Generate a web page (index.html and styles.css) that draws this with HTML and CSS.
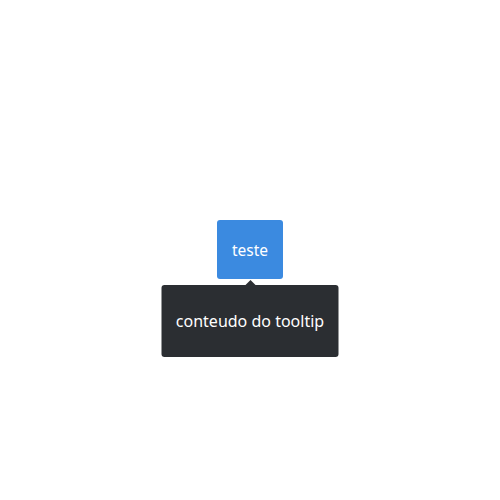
FILE: index.html
```html
<!DOCTYPE html>
<html>
<head>
<meta charset="utf-8">
<link rel="stylesheet" href="styles.css">
</head>
<body>
<div class="stage">
  <div class="anchor">
    <button class="btn">teste</button>
    <div class="tooltip">
      <span class="arrow"></span>
      conteudo do tooltip
    </div>
  </div>
</div>
</body>
</html>
```
FILE: styles.css
```css
html, body {
  margin: 0;
  padding: 0;
  background: #fff;
  font-family: "Noto Sans", "Open Sans", sans-serif;
}
.stage {
  width: 500px;
  height: 500px;
  display: flex;
  align-items: center;
  justify-content: center;
}
.anchor {
  position: relative;
  margin-top: -1px;
}
.btn {
  width: 66px;
  height: 59px;
  border: none;
  border-radius: 3px;
  background: #3b8ae0;
  color: #fff;
  font-family: inherit;
  font-size: 15.5px;
  padding: 0;
  display: flex;
  align-items: center;
  justify-content: center;
}
.tooltip {
  position: absolute;
  top: 65px;
  left: 50%;
  transform: translateX(-50%);
  width: 177px;
  height: 72px;
  box-sizing: border-box;
  background: #2b2e32;
  color: #fff;
  border-radius: 3px;
  font-size: 16px;
  display: flex;
  align-items: center;
  justify-content: center;
  white-space: nowrap;
}
.arrow {
  position: absolute;
  top: -5px;
  left: 50%;
  margin-left: -5px;
  width: 0;
  height: 0;
  border-left: 5px solid transparent;
  border-right: 5px solid transparent;
  border-bottom: 5px solid #2b2e32;
}
```
